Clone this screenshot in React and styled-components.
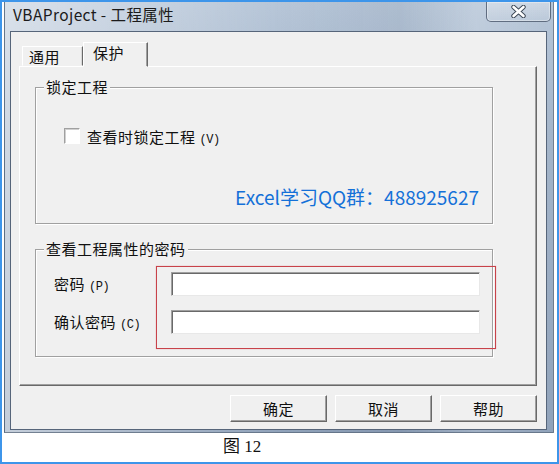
import React from "react";
import styled, { createGlobalStyle } from "styled-components";

const Global = createGlobalStyle`
  html, body { margin: 0; padding: 0; background: #fff; }
  body { font-family: "Noto Sans CJK SC", "Noto Sans", sans-serif; color: #111; }
  * { box-sizing: border-box; }
`;

const Page = styled.div`
  width: 559px;
  height: 464px;
  border: 2px solid #3d95ea;
  padding: 0 2px 0 2px;
  display: flex;
  flex-direction: column;
  background: #fff;
  overflow: hidden;
`;

const Window = styled.div`
  width: 550px;
  height: 431px;
  padding: 0 6px 2px 5px;
  display: flex;
  flex-direction: column;
  border: 1px solid rgba(50, 66, 88, 0.6);
  border-top: none;
  background:
    linear-gradient(90deg, rgba(255,255,255,0.5) 0%, rgba(255,255,255,0.3) 22%, rgba(255,255,255,0.05) 50%, rgba(0,0,0,0.03) 72%, rgba(255,255,255,0.2) 86%, rgba(255,255,255,0.05) 100%),
    linear-gradient(180deg, #b3c3d6 0%, #9fb1c7 30%, #8a9db6 100%);
`;

const TitleBar = styled.div`
  height: 30px;
  display: flex;
  align-items: flex-start;
  justify-content: space-between;
`;

const Title = styled.div`
  padding: 1px 0 0 3px;
  font-size: 15.5px;
  line-height: 22px;
  color: #1b1b1b;
  letter-spacing: 0.4px;
`;

const Close = styled.div`
  width: 65px;
  height: 21px;
  margin: -1px -4px 0 0;
  border: 1px solid rgba(60, 74, 95, 0.75);
  border-radius: 0 0 5px 5px;
  background: linear-gradient(180deg, rgba(255,255,255,0.3), rgba(255,255,255,0.08));
  box-shadow: inset 0 0 0 1px rgba(255,255,255,0.35);
  display: flex;
  align-items: center;
  justify-content: center;
`;

const Client = styled.div`
  flex: 1;
  border: 1px solid #56657a;
  background: #f0f0f0;
  padding: 10px 9px 7px 8px;
  display: flex;
  flex-direction: column;
`;

const TabStrip = styled.div`
  height: 25px;
  margin-bottom: -1px;
  padding-left: 3px;
  display: flex;
  align-items: flex-end;
  position: relative;
  z-index: 1;
`;

const Tab = styled.div`
  width: ${(p) => (p.$active ? 65 : 61)}px;
  height: ${(p) => (p.$active ? 25 : 20)}px;
  margin-bottom: ${(p) => (p.$active ? 0 : 1)}px;
  padding: ${(p) => (p.$active ? "1px 0 0 9px" : "1px 0 0 6px")};
  background: #f0f0f0;
  border: 1px solid;
  border-color: #fff #696969 transparent #fff;
  box-shadow: ${(p) => (p.$active ? "inset -1px 0 0 #a0a0a0" : "inset -1px 0 0 #d8d8d8")};
  font-size: 15px;
  line-height: 18px;
  letter-spacing: 0.5px;
  color: #111;
`;

const Panel = styled.div`
  height: 320px;
  border: 1px solid;
  border-color: #fff #696969 #696969 #fff;
  box-shadow: inset -1px -1px 0 #a0a0a0;
  padding: 0 0 0 15px;
  display: flex;
  flex-direction: column;
`;

const Group = styled.div`
  width: 458px;
  height: ${(p) => p.$h}px;
  margin-top: ${(p) => p.$mt}px;
  border: 1px solid #a0a0a0;
  box-shadow: 1px 1px 0 #fff, inset 1px 1px 0 #fff;
  display: flex;
  flex-direction: column;
`;

const Legend = styled.div`
  align-self: flex-start;
  margin: -10px 0 0 8px;
  padding: 0 2px;
  height: 18px;
  background: #f0f0f0;
  font-size: 15px;
  line-height: 18px;
  letter-spacing: 0.5px;
  color: #111;
`;

const CheckRow = styled.label`
  margin-top: 30px;
  height: 20px;
  padding-left: 28px;
  display: flex;
  align-items: center;
  gap: 7px;
  font-size: 15px;
  letter-spacing: 0.5px;
  color: #111;
`;

const Box = styled.span`
  width: 16px;
  height: 16px;
  background: #fff;
  border: 1px solid;
  border-color: #a0a0a0 #fff #fff #a0a0a0;
  box-shadow: inset 1px 1px 0 #d0d0d0;
`;

const Accel = styled.span`
  font-family: "Liberation Mono", monospace;
  font-size: 12px;
  letter-spacing: -0.5px;
  margin-left: 4px;
`;

const Promo = styled.div`
  margin-top: 38px;
  padding-right: 13px;
  text-align: right;
  font-size: 19px;
  line-height: 26px;
  color: #1470d8;
`;

const PwBody = styled.div`
  margin-top: 8px;
  display: flex;
  align-items: flex-start;
`;

const Labels = styled.div`
  width: 120px;
  flex-shrink: 0;
  padding: 6px 0 0 18px;
  display: flex;
  flex-direction: column;
  gap: 14px;
`;

const Label = styled.div`
  height: 24px;
  line-height: 24px;
  font-size: 15px;
  letter-spacing: 0.5px;
  color: #111;
  white-space: nowrap;
`;

const Mark = styled.div`
  flex-shrink: 0;
  border: 1px solid #c8424a;
  box-shadow: 0 0 1px rgba(200, 66, 74, 0.5);
  padding: 5px 15px 14px 14px;
  display: flex;
  flex-direction: column;
  gap: 14px;
`;

const Input = styled.div`
  width: 309px;
  height: 24px;
  background: #fff;
  border: 1px solid;
  border-color: #a0a0a0 #e8e8e8 #e8e8e8 #a0a0a0;
  box-shadow: inset 1px 1px 0 #696969;
`;

const Buttons = styled.div`
  margin-top: 9px;
  display: flex;
  justify-content: flex-end;
  gap: 8px;
`;

const Button = styled.button`
  width: 97px;
  height: 27px;
  padding: 0;
  background: #f0f0f0;
  border: 1px solid;
  border-color: #fff #696969 #696969 #fff;
  box-shadow: inset -1px -1px 0 #a0a0a0;
  font-family: "Noto Sans CJK SC", sans-serif;
  font-size: 15px;
  letter-spacing: 0.5px;
  color: #111;
`;

const Caption = styled.div`
  margin-top: 3px;
  padding-left: 219px;
  font-family: "Liberation Serif", "Noto Sans CJK SC", serif;
  font-size: 17px;
  line-height: 22px;
  color: #111;
`;

const CloseIcon = () => (
  <svg width="15" height="13" viewBox="0 0 15 13">
    <path d="M2.5 2 L12.5 11 M12.5 2 L2.5 11" stroke="#3a4553" strokeWidth="4.4" strokeLinecap="round" />
    <path d="M2.5 2 L12.5 11 M12.5 2 L2.5 11" stroke="#ffffff" strokeWidth="2.6" strokeLinecap="round" />
  </svg>
);

export default function App() {
  return (
    <>
      <Global />
      <Page>
        <Window>
          <TitleBar>
            <Title>VBAProject - 工程属性</Title>
            <Close>
              <CloseIcon />
            </Close>
          </TitleBar>
          <Client>
            <TabStrip>
              <Tab>通用</Tab>
              <Tab $active>保护</Tab>
            </TabStrip>
            <Panel>
              <Group $mt={20} $h={137}>
                <Legend>锁定工程</Legend>
                <CheckRow>
                  <Box />
                  <span>
                    查看时锁定工程<Accel>(V)</Accel>
                  </span>
                </CheckRow>
                <Promo>Excel学习QQ群：488925627</Promo>
              </Group>
              <Group $mt={25} $h={108}>
                <Legend>查看工程属性的密码</Legend>
                <PwBody>
                  <Labels>
                    <Label>
                      密码<Accel>(P)</Accel>
                    </Label>
                    <Label>
                      确认密码<Accel>(C)</Accel>
                    </Label>
                  </Labels>
                  <Mark>
                    <Input />
                    <Input />
                  </Mark>
                </PwBody>
              </Group>
            </Panel>
            <Buttons>
              <Button>确定</Button>
              <Button>取消</Button>
              <Button>帮助</Button>
            </Buttons>
          </Client>
        </Window>
        <Caption>图 12</Caption>
      </Page>
    </>
  );
}
